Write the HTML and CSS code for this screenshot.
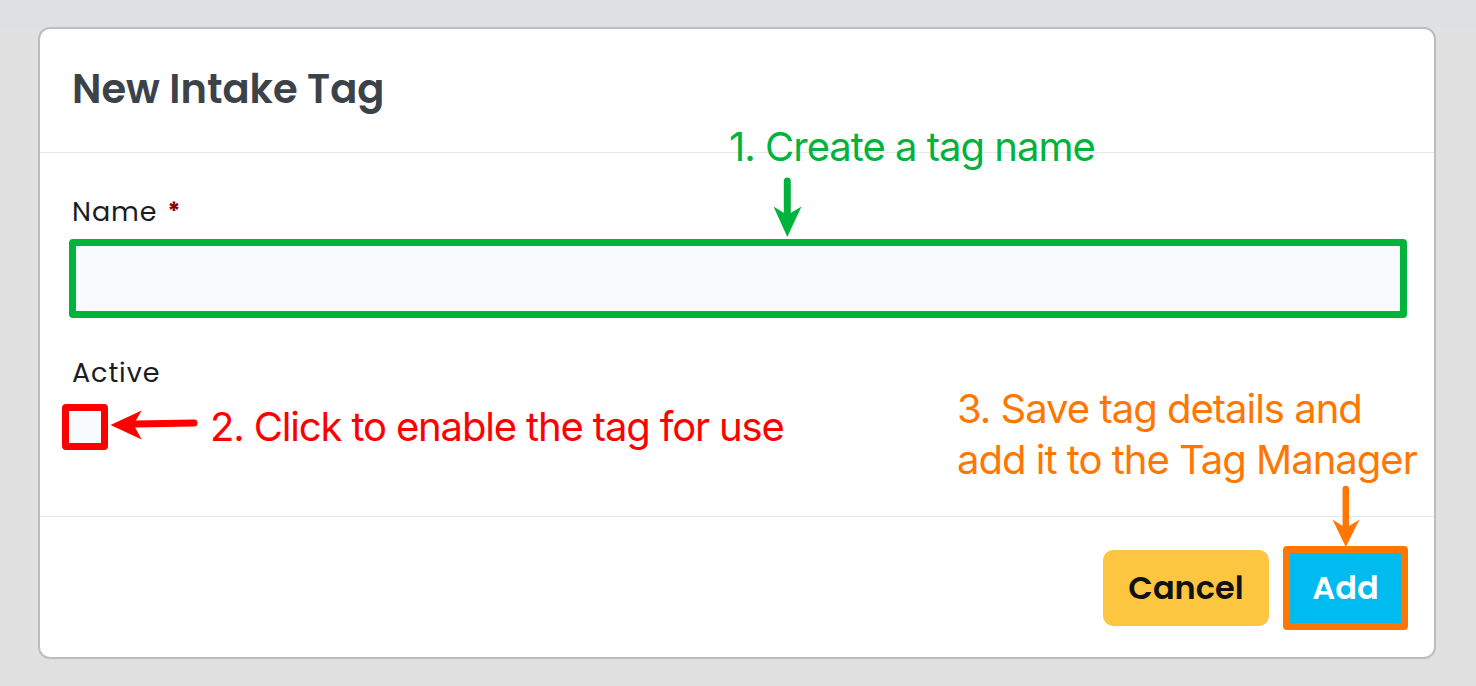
FILE: index.html
```html
<!DOCTYPE html>
<html lang="en">
<head>
<meta charset="utf-8">
<title>New Intake Tag</title>
<link rel="stylesheet" href="styles.css">
</head>
<body>
<div class="modal">
  <header class="modal-header">
    <h1 class="modal-title">New Intake Tag</h1>
  </header>
  <section class="modal-body">
    <label class="field-label name-label">Name <span class="req">*</span></label>
    <div class="text-input"></div>
    <label class="field-label active-label">Active</label>
    <div class="checkbox"></div>
  </section>
  <footer class="modal-footer">
    <button class="btn btn-cancel">Cancel</button>
    <button class="btn btn-add">Add</button>
  </footer>

  <div class="note note-green">1. Create a tag name</div>
  <div class="note note-red">2. Click to enable the tag for use</div>
  <div class="note note-orange">3. Save tag details and<br>add it to the Tag Manager</div>

  <svg class="arrows" width="1394" height="628" viewBox="0 0 1394 628">
    <g fill="#00b33c" stroke="none">
      <line x1="747.3" y1="152" x2="747.3" y2="192" stroke="#00b33c" stroke-width="7" stroke-linecap="round"/>
      <polygon points="747.3,208 733.5,177.5 747.3,186 761.5,177.5"/>
    </g>
    <g fill="#ff0000">
      <line x1="95" y1="395" x2="154" y2="394" stroke="#ff0000" stroke-width="7" stroke-linecap="round"/>
      <polygon points="70.5,396 101.7,381.5 93.5,395.5 101.7,410.5"/>
    </g>
    <g fill="#ff7700">
      <line x1="1305.8" y1="460" x2="1305.8" y2="501" stroke="#ff7700" stroke-width="6.5" stroke-linecap="round"/>
      <polygon points="1305.8,518 1292.5,490.5 1305.8,499 1319.5,490.5"/>
    </g>
  </svg>
</div>
</body>
</html>
```

FILE: styles.css
```css
* { box-sizing: border-box; }

html, body {
  margin: 0;
  padding: 0;
}

body {
  width: 1476px;
  height: 686px;
  overflow: hidden;
  background: linear-gradient(#dee1e4 0, #dee1e4 27px, #e1e1e1 27px, #e1e1e1 100%);
  font-family: "Poppins", "Inter", "Liberation Sans", sans-serif;
  padding-top: 27px;
  padding-left: 38px;
}

.modal {
  position: relative;
  width: 1398px;
  height: 632px;
  background: #ffffff;
  border: 2px solid #bdbdbd;
  border-radius: 12px;
  display: flex;
  flex-direction: column;
}

.modal-header {
  height: 124px;
  padding: 36px 0 0 32px;
  border-bottom: 1px solid #e8e8e8;
}

.modal-title {
  margin: 0;
  font-size: 40px;
  line-height: 48px;
  font-weight: 600;
  color: #3c4249;
  letter-spacing: 0;
}

.modal-body {
  height: 364px;
  padding: 0 27px 0 32px;
  border-bottom: 1px solid #e8e8e8;
  display: flex;
  flex-direction: column;
  align-items: flex-start;
}

.field-label {
  display: block;
  font-size: 27px;
  line-height: 31px;
  font-weight: 400;
  color: #1c1d21;
  letter-spacing: 0.9px;
}

.name-label { margin-top: 43px; }

.req {
  color: #8b0000;
  font-weight: 700;
  font-size: 24px;
  vertical-align: top;
  margin-left: 2px;
}

.text-input {
  margin-top: 12px;
  margin-left: -3px;
  align-self: stretch;
  height: 79px;
  background: #f8fbfd;
  border: 7px solid #00b33c;
  border-radius: 4px;
}

.active-label { margin-top: 39px; }

.checkbox {
  margin-top: 16px;
  margin-left: -10px;
  width: 46px;
  height: 46px;
  background: #f8fbfd;
  border: 7px solid #ff0000;
  border-radius: 4px;
}

.modal-footer {
  flex: 1;
  display: flex;
  justify-content: flex-end;
  align-items: center;
  gap: 14px;
  padding: 2px 26px 0 0;
}

.btn {
  font-family: "Poppins", "Inter", "Liberation Sans", sans-serif;
  font-weight: 600;
  font-size: 32px;
  border: none;
  padding: 0;
  cursor: pointer;
}

.btn-cancel {
  width: 166px;
  height: 76px;
  background: #fdc640;
  color: #111111;
  border-radius: 10px;
}

.btn-add {
  width: 125px;
  height: 84px;
  background: #00bbf0;
  color: #ffffff;
  border: 7px solid #ff7700;
  border-radius: 4px;
}

.note {
  position: absolute;
  font-family: "Inter", "Liberation Sans", sans-serif;
  font-size: 40px;
  line-height: 48px;
  font-weight: 400;
  letter-spacing: -1px;
  white-space: nowrap;
}

.note-green {
  color: #00b33c;
  left: 689px;
  top: 94px;
}

.note-red {
  color: #ff0000;
  left: 170px;
  top: 374px;
  letter-spacing: -1.15px;
}

.note-orange {
  color: #ff7700;
  line-height: 51px;
  left: 917px;
  top: 354px;
}

.arrows {
  position: absolute;
  left: 0;
  top: 0;
  pointer-events: none;
}
```
